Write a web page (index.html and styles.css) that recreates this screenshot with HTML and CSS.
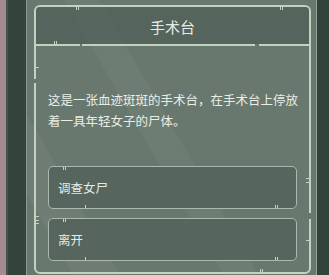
FILE: index.html
```html
<!DOCTYPE html>
<html lang="zh">
<head>
<meta charset="utf-8">
<link rel="stylesheet" href="styles.css">
</head>
<body>
<div class="screen">
  <div class="edge-pink"></div>
  <div class="edge-dark"></div>
  <div class="panel">
    <div class="frame">
      <div class="header">
        <span class="title">手术台</span>
        <i class="tick t-top1"></i>
        <i class="tick t-top2"></i>
        <i class="tick t-div1"></i>
        <i class="gap g-div1"></i>
        <i class="gap g-div2"></i>
      </div>
      <div class="content">
        <p class="desc">这是一张血迹斑斑的手术台，在手术台上停放着一具年轻女子的尸体。</p>
        <div class="choices">
          <div class="choice">调查女尸<i class="tick c-top"></i><i class="tick c-bot"></i><i class="tick c-br"></i></div>
          <div class="choice">离开<i class="tick c-top"></i><i class="tick c-bot"></i><i class="tick c-br"></i></div>
        </div>
      </div>
      <i class="htick l1"></i>
      <i class="vgap lg1"></i>
      <i class="htick l2"></i>
      <i class="htick l3"></i>
      <i class="htick r1"></i>
      <i class="htick r2"></i>
      <i class="vgap rg1"></i>
      <i class="tick b1"></i>
    </div>
  </div>
  <div class="edge-right"></div>
</div>
</body>
</html>
```
FILE: styles.css
```css
html, body {
  margin: 0;
  padding: 0;
  width: 329px;
  height: 275px;
  overflow: hidden;
  background: #2f3e38;
  font-family: "Noto Sans CJK SC", "Noto Sans", sans-serif;
}
.screen {
  display: flex;
  height: 275px;
}
.edge-pink {
  width: 6px;
  background: #a48b8f;
}
.edge-dark {
  width: 18px;
  background: #33443d;
  border-left: 2px solid #45524d;
}
.edge-right {
  flex: 1;
  background: #33433c;
}
.panel {
  width: 277px;
  flex: none;
  background:
    linear-gradient(60deg, rgba(255,255,255,0) 0px, rgba(255,255,255,0) 40px, rgba(255,255,255,0.04) 40px, rgba(255,255,255,0.04) 80px, rgba(255,255,255,0) 80px, rgba(255,255,255,0) 170px, rgba(255,255,255,0.03) 170px, rgba(255,255,255,0.03) 200px, rgba(255,255,255,0) 200px),
    #69786f;
  border-left: 1px solid #8a9a91;
  border-right: 1px solid #93a49a;
  padding: 5px 5px 0 7px;
  box-sizing: content-box;
}
.frame {
  position: relative;
  height: 269px;
  box-sizing: border-box;
  border: 2px solid #c2d2c0;
  border-radius: 6px;
  display: flex;
  flex-direction: column;
}
.header {
  position: relative;
  height: 39px;
  box-sizing: border-box;
  background: rgba(70, 86, 78, 0.55);
  border-bottom: 2px solid #c2d2c0;
  border-radius: 4px 4px 0 0;
  display: flex;
  align-items: center;
  justify-content: center;
}
.title {
  color: #e6ece4;
  font-size: 15px;
  line-height: 1;
  margin-top: 1px;
}
.content {
  flex: 1;
  padding: 43px 12px 0 12px;
  display: flex;
  flex-direction: column;
}
.desc {
  margin: 0 -8px 0 0;
  color: #e8eee6;
  font-size: 12.5px;
  line-height: 21px;
}
.choices {
  margin-top: 35px;
  display: flex;
  flex-direction: column;
  gap: 9px;
}
.choice {
  position: relative;
  height: 43px;
  box-sizing: border-box;
  background: #56655d;
  border: 1.5px solid #a9b9ab;
  border-radius: 5px;
  color: #e6ece4;
  font-size: 12.5px;
  display: flex;
  align-items: center;
  padding-left: 9px;
}
.tick, .htick, .gap, .vgap {
  position: absolute;
  display: block;
}
.tick {
  width: 3px;
  height: 3px;
  border-left: 1px solid #c2d2c0;
  border-right: 1px solid #c2d2c0;
  box-sizing: border-box;
}
.t-top1 { left: 40px; top: 0; }
.t-top2 { left: 244px; top: 0; }
.t-div1 { left: 18px; bottom: 0; }
.gap {
  width: 2px;
  height: 2px;
  background: #66756d;
  bottom: -2px;
}
.g-div1 { left: 44px; }
.g-div2 { left: 219px; width: 4px; }
.c-top { left: 14px; top: 0; }
.c-bot { left: 36px; bottom: 0; width: 2px; border-right: 0; }
.c-br { right: 18px; bottom: 0; }
.b1 { left: 224px; bottom: 0; }
.htick {
  width: 3px;
  height: 1px;
  background: #c2d2c0;
}
.l1 { left: 0; top: 60px; }
.l2 { left: 0; top: 209px; height: 3px; background: none; border-top: 1px solid #c2d2c0; border-bottom: 1px solid #c2d2c0; }
.l3 { left: 0; top: 216px; }
.r1 { right: 0; top: 171px; height: 3px; background: none; border-top: 1px solid #c2d2c0; border-bottom: 1px solid #c2d2c0; }
.r2 { right: 0; top: 233px; }
.vgap {
  width: 2px;
  height: 4px;
  background: #69786f;
}
.lg1 { left: -2px; top: 72px; }
.rg1 { right: -2px; top: 206px; height: 6px; }
```
